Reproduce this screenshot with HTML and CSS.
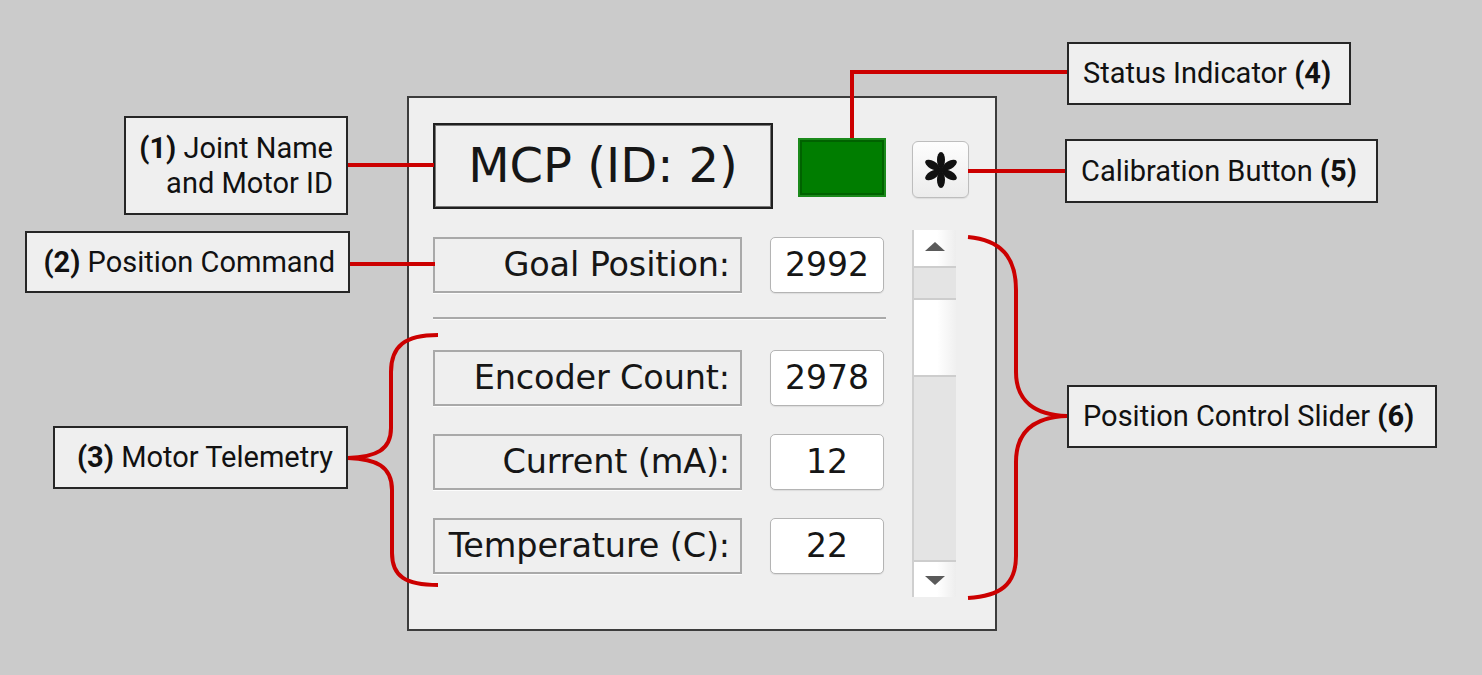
FILE: index.html
```html
<!DOCTYPE html>
<html>
<head>
<meta charset="utf-8">
<link rel="stylesheet" href="styles.css">
</head>
<body>
<div class="stage">
  <div class="panel">
    <div class="top-row">
      <div class="name-box">MCP (ID: 2)</div>
      <div class="status"></div>
      <div class="calib">
        <svg width="38" height="38" viewBox="-19 -19 38 38">
          <g fill="#111">
            <ellipse cx="0" cy="-10" rx="4" ry="8"/>
            <ellipse cx="0" cy="-10" rx="4" ry="8" transform="rotate(60)"/>
            <ellipse cx="0" cy="-10" rx="4" ry="8" transform="rotate(120)"/>
            <ellipse cx="0" cy="-10" rx="4" ry="8" transform="rotate(180)"/>
            <ellipse cx="0" cy="-10" rx="4" ry="8" transform="rotate(240)"/>
            <ellipse cx="0" cy="-10" rx="4" ry="8" transform="rotate(300)"/>
            <circle cx="0" cy="0" r="3.2"/>
          </g>
        </svg>
      </div>
    </div>
    <div class="body">
      <div class="fields">
        <div class="row"><div class="label">Goal Position:</div><div class="value">2992</div></div>
        <div class="sep"></div>
        <div class="telemetry">
          <div class="row"><div class="label">Encoder Count:</div><div class="value">2978</div></div>
          <div class="row"><div class="label">Current (mA):</div><div class="value">12</div></div>
          <div class="row"><div class="label">Temperature (C):</div><div class="value">22</div></div>
        </div>
      </div>
      <div class="scrollbar">
        <div class="sb-btn sb-up"><span class="tri-up"></span></div>
        <div class="sb-track sb-t1"></div>
        <div class="sb-handle"></div>
        <div class="sb-track sb-t2"></div>
        <div class="sb-btn sb-down"><span class="tri-down"></span></div>
      </div>
    </div>
  </div>

  <svg class="annot" width="1482" height="675" viewBox="0 0 1482 675">
    <g fill="none" stroke="#cc0000" stroke-width="4" stroke-linecap="butt">
      <line x1="347" y1="165" x2="434" y2="165"/>
      <line x1="349" y1="264" x2="435" y2="264"/>
      <polyline points="852,138 852,72 1068,72"/>
      <line x1="968" y1="171" x2="1066" y2="171"/>
      <path d="M438,335 C405,335 391,346 391,372 L391,428 C391,450 376,457 348,458 C376,459 392,466 392,490 L392,553 C392,576 405,585 438,585"/>
      <path d="M968,237 C1000,240 1016,256 1016,290 L1016,372 C1016,402 1036,415 1067,416 C1036,417 1016,430 1016,462 L1016,556 C1016,585 1000,596 968,598"/>
    </g>
  </svg>

  <div class="callout right-text c1"><span><b>(1)</b> Joint Name<br>and Motor ID</span></div>
  <div class="callout right-text c2"><span><b>(2)</b> Position Command</span></div>
  <div class="callout right-text c3"><span><b>(3)</b> Motor Telemetry</span></div>
  <div class="callout left-text c4"><span>Status Indicator <b>(4)</b></span></div>
  <div class="callout left-text c5"><span>Calibration Button <b>(5)</b></span></div>
  <div class="callout left-text c6"><span>Position Control Slider <b>(6)</b></span></div>
</div>
</body>
</html>
```

FILE: styles.css
```css
* { box-sizing: border-box; }
html, body { margin: 0; padding: 0; }
body {
  background: #cbcbcb;
  width: 1482px;
  height: 675px;
  overflow: hidden;
}
.stage {
  position: relative;
  width: 1482px;
  height: 675px;
  padding-top: 96px;
  padding-left: 407px;
}

/* ---------- panel ---------- */
.panel {
  width: 590px;
  height: 535px;
  background: #efefef;
  border: 2px solid #3c3c3c;
  padding: 25px 0 0 24px;
  font-family: "DejaVu Sans", sans-serif;
  color: #161616;
}
.top-row {
  display: flex;
  align-items: center;
  height: 86px;
}
.name-box {
  width: 340px;
  height: 86px;
  border: 2px solid #202020;
  box-shadow: inset 0 0 0 1px #7a7a7a;
  display: flex;
  align-items: center;
  justify-content: center;
  font-size: 48px;
  padding-bottom: 2px;
}
.status {
  width: 88px;
  height: 59px;
  margin-left: 25px;
  margin-top: 2px;
  background: #007d00;
  border: 2px solid #1b8a1b;
  box-shadow: inset 0 0 0 2px #006200;
}
.calib {
  width: 57px;
  height: 57px;
  margin-left: 26px;
  margin-top: 7px;
  border: 1px solid #bdbdbd;
  border-radius: 6px;
  background: linear-gradient(#fdfdfd, #ececec);
  box-shadow: 0 1px 1px rgba(0,0,0,0.08);
  display: flex;
  align-items: center;
  justify-content: center;
}

.body {
  display: flex;
  margin-top: 24px;
}
.fields {
  width: 453px;
  padding-top: 3px;
  display: flex;
  flex-direction: column;
}
.row {
  display: flex;
  align-items: center;
  gap: 28px;
  height: 57px;
}
.label {
  width: 309px;
  height: 56px;
  border: 2px solid #a9a9a9;
  box-shadow: 0 1px 0 #fcfcfc;
  background: #efefef;
  display: flex;
  align-items: center;
  justify-content: flex-end;
  padding-right: 10px;
  font-size: 33.5px;
  white-space: nowrap;
  letter-spacing: -0.15px;
}
.value {
  width: 114px;
  height: 56px;
  background: #fff;
  border: 1px solid #b4b4b4;
  border-radius: 5px;
  box-shadow: 0 1px 1px rgba(0,0,0,0.08);
  display: flex;
  align-items: center;
  justify-content: center;
  font-size: 33px;
}
.sep {
  height: 3px;
  margin-top: 24px;
  border-top: 2px solid #a9a9a9;
  border-bottom: 1px solid #fbfbfb;
}
.telemetry {
  margin-top: 29px;
  display: flex;
  flex-direction: column;
  gap: 27px;
}

/* ---------- scrollbar ---------- */
.scrollbar {
  width: 44px;
  height: 367px;
  margin-left: 26px;
  margin-top: -3px;
  display: flex;
  flex-direction: column;
  border-left: 2px solid #cfcfcf;
}
.sb-btn {
  background: linear-gradient(to right, #ffffff 55%, #ededed);
  display: flex;
  align-items: center;
  justify-content: center;
}
.sb-up { height: 36px; }
.sb-down { height: 37px; }
.sb-track {
  background: #e4e4e4;
  border-top: 2px solid #cdcdcd;
}
.sb-t1 { height: 32px; }
.sb-t2 { flex: 1; }
.sb-handle {
  height: 77px;
  background: linear-gradient(to right, #ffffff 55%, #f0f0f0);
  border-top: 2px solid #cdcdcd;
}
.sb-t2 + .sb-down { border-top: 2px solid #cdcdcd; }
.tri-up, .tri-down {
  width: 0;
  height: 0;
  border-left: 10px solid transparent;
  border-right: 10px solid transparent;
}
.tri-up { border-bottom: 9px solid #5a5a5a; margin-top: -4px; }
.tri-down { border-top: 9px solid #5a5a5a; margin-top: 2px; }

/* ---------- annotations ---------- */
.annot {
  position: absolute;
  left: 0;
  top: 0;
  pointer-events: none;
}
.callout {
  position: absolute;
  background: #efefef;
  border: 2px solid #262626;
  font-family: Roboto, "Liberation Sans", sans-serif;
  font-size: 29px;
  color: #111;
  display: flex;
  align-items: center;
  line-height: 35px;
  white-space: nowrap;
}
.callout b { font-weight: 700; }
.right-text { justify-content: flex-end; text-align: right; padding-right: 13px; }
.left-text { justify-content: flex-start; padding-left: 14px; }
.c1 { left: 124px; top: 116px; width: 224px; height: 99px; }
.c2 { left: 25px; top: 231px; width: 325px; height: 62px; }
.c3 { left: 53px; top: 426px; width: 295px; height: 63px; }
.c4 { left: 1067px; top: 42px; width: 284px; height: 63px; }
.c5 { left: 1065px; top: 139px; width: 313px; height: 64px; }
.c6 { left: 1067px; top: 385px; width: 370px; height: 63px; }
```
